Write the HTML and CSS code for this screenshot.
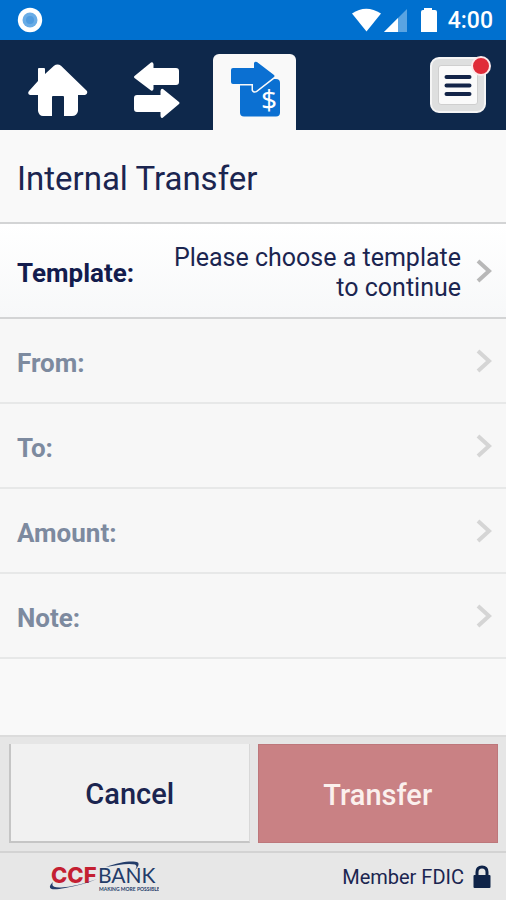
FILE: index.html
```html
<!DOCTYPE html>
<html lang="en">
<head>
<meta charset="utf-8">
<meta name="viewport" content="width=device-width, initial-scale=1">
<title>Internal Transfer</title>
<link rel="stylesheet" href="styles.css">
</head>
<body>
<div class="app">
  <div class="status">
    <svg class="status-dot" width="26" height="26" viewBox="0 0 26 26" aria-hidden="true"><circle cx="13" cy="13" r="12.2" fill="#fff"/><circle cx="13" cy="13" r="7.5" fill="#69ace6"/><circle cx="13" cy="13" r="4" fill="#4f9bdf"/></svg>
    <div class="status-right">
      <svg width="88" height="26" viewBox="0 0 88 26" aria-hidden="true">
        <path d="M0 6.500Q14 -3 29 6.500L14.500 24.500Z" fill="#fff"/>
        <path d="M55 2V25H32Z" fill="#5aa4e2"/><path d="M46 11V25H32Z" fill="#fff"/>
        <path d="M72 1H80V3H83Q85 3 85 5V25H69V5Q69 3 71 3H72Z" fill="#fff"/>
      </svg>
      <span>4:00</span>
    </div>
  </div>
  <nav class="nav">
    <a class="tab" href="#" aria-label="Home">
      <svg width="60" height="54" viewBox="0 0 60 54" aria-hidden="true"><path d="M10 5Q10 4 11 4H16Q17 4 17 5V10L26 1.800Q29.500 -1 33 1.800L59 27Q60 30 57 31H50V47Q49 52 44 52H36V33Q36 32 35 32H25Q24 32 24 33V52H15Q11 52 10 47V31H2Q-1 30 1 27L10 17Z" fill="#fff"/></svg>
    </a>
    <a class="tab tab-arrows" href="#" aria-label="Transfers">
      <svg width="46" height="56" viewBox="0 0 46 56" aria-hidden="true" fill="#fff"><path d="M0.500 14L17 0.500Q19 -.5 19.500 2V6H42Q45 6 45 9V20Q45 23 42 23H19.500V27Q19 29.500 17 28.500L.5 16Q-.5 15 .5 14Z"/><path d="M45 40L29 27Q27 26 26.500 29V33H3Q0 33 0 36V47Q0 50 3 50H26.500V54Q27 57 29 55.500L45 42Q46 41 45 40Z"/></svg>
    </a>
    <a class="tab tab-active" href="#" aria-label="Internal transfer" aria-current="page">
      <svg width="52" height="56" viewBox="0 0 52 56" aria-hidden="true">
        <rect x="11" y="18" width="40" height="37.500" rx="4" fill="#0b70d2"/>
        <path d="M4 7H25V2Q26 0 28 1L45 14Q46 15 45 16L27 30Q25 31 24 29V23H4Q2 23 2 21V9Q2 7 4 7Z" fill="#0b70d2" stroke="#f9f9f9" stroke-width="3" paint-order="stroke"/>
        <text class="dollar" x="40" y="49" text-anchor="middle">$</text>
      </svg>
    </a>
    <button class="menu" type="button" aria-label="Menu">
      <span class="menu-inner"><svg width="28" height="24" viewBox="0 0 28 24" aria-hidden="true"><path d="M2.500 4H25.500M2.500 12.500H25.500M2.500 21H25.500" stroke="#132448" stroke-width="4" stroke-linecap="round"/></svg></span>
      <span class="badge"></span>
    </button>
  </nav>
  <main class="content">
    <h1>Internal Transfer</h1>
    <button class="row row-template" type="button"><span class="label">Template:</span><span class="value">Please choose a template to continue</span><svg class="chev" width="16" height="24" viewBox="0 0 16 24" aria-hidden="true"><path d="M2 2L13 12L2 22"/></svg></button>
    <button class="row" type="button" disabled><span class="label">From:</span><svg class="chev" width="16" height="24" viewBox="0 0 16 24" aria-hidden="true"><path d="M2 2L13 12L2 22"/></svg></button>
    <button class="row" type="button" disabled><span class="label">To:</span><svg class="chev" width="16" height="24" viewBox="0 0 16 24" aria-hidden="true"><path d="M2 2L13 12L2 22"/></svg></button>
    <button class="row" type="button" disabled><span class="label">Amount:</span><svg class="chev" width="16" height="24" viewBox="0 0 16 24" aria-hidden="true"><path d="M2 2L13 12L2 22"/></svg></button>
    <button class="row" type="button" disabled><span class="label">Note:</span><svg class="chev" width="16" height="24" viewBox="0 0 16 24" aria-hidden="true"><path d="M2 2L13 12L2 22"/></svg></button>
  </main>
  <div class="actions">
    <button class="btn cancel" type="button">Cancel</button>
    <button class="btn transfer" type="button" disabled>Transfer</button>
  </div>
  <footer class="footer">
    <svg class="logo" width="110" height="32" viewBox="0 0 110 32" role="img" aria-label="CCFBANK, making more possible">
      <text class="ccf" x="2" y="22">CCF</text>
      <text class="bank" x="49" y="22">BANK</text>
      <text class="tag" x="50" y="30">MAKING MORE POSSIBLE</text>
      <path d="M4 21C-3 28 2 30 16 27Q34 24 48 18Q26 26 12 26.500Q1 27 4 21Z" fill="#233c69"/>
      <path d="M57 6C70 1 84 -1 89 1.500Q91 4 86 9Q89 5 86 3.500C79 2 68 4 57 6Z" fill="#233c69"/>
    </svg>
    <div class="fdic"><span>Member FDIC</span>
      <svg width="18" height="24" viewBox="0 0 18 24" aria-hidden="true"><path d="M4 11V7Q4 2 9 2T14 7V11" fill="none" stroke="#0f2449" stroke-width="3"/><rect x="0.500" y="10" width="17" height="13" rx="1" fill="#0f2449"/></svg>
    </div>
  </footer>
</div>
</body>
</html>
```
FILE: styles.css
```css
* { box-sizing: border-box; }
body { margin: 0; font-family: Roboto, "Liberation Sans", sans-serif; color: #1b2550; background: #f9f9f9; }
button { font: inherit; color: inherit; border: 0; border-radius: 0; margin: 0; padding: 0; background: none; }
svg { display: block; flex: none; }
.app { min-height: 100vh; display: flex; flex-direction: column; }
.status { height: 40px; padding: 0 13px 0 17px; display: flex; align-items: center; justify-content: space-between; background: #0070cf; color: #fff; }
.status-right { display: flex; align-items: center; gap: 8px; font-size: 23px; font-weight: 500; line-height: 28px; }
.status-right span { padding-top: 2px; }
.nav { height: 90px; padding: 0 20px 0 28px; display: flex; align-items: flex-end; background: #0e284b; }
.tab { height: 76px; display: flex; justify-content: center; padding-top: 10px; }
.tab + .tab { margin-left: 46px; }
.tab-arrows { padding-top: 8px; }
.tab + .tab-active { width: 83px; margin-left: 33px; padding-top: 7px; background: #f9f9f9; border-radius: 6px 6px 0 0; }
.dollar { font: 28px "Noto Sans", sans-serif; fill: #fff; }
.menu { position: relative; width: 56px; height: 56px; margin: 0 0 17px auto; padding: 6px; border-radius: 9px; background: #dedfdf; border: 2px solid #f5f5f5; }
.menu-inner { height: 100%; display: flex; align-items: center; justify-content: center; background: #fafafa; border: 1px solid #cfcfcf; border-radius: 3px; }
.badge { position: absolute; top: -3px; right: -7px; width: 20px; height: 20px; border-radius: 50%; border: 2px solid #fce9ea; background: #e02b38; }
.content { flex: 1; }
h1 { margin: 0; height: 94px; padding: 5px 17px 0; display: flex; align-items: center; font-size: 33px; line-height: 40px; font-weight: 400; border-bottom: 2px solid #d3d4d5; }
.row { width: 100%; min-height: 85px; padding: 0 14px 0 17px; display: flex; align-items: center; text-align: left; background: #f7f7f7; border-bottom: 2px solid #e7e8e8; font-size: 26px; line-height: 30px; }
.row .label { flex: 1; padding-top: 5px; color: #7d8a9f; font-weight: 700; }
.row .chev { fill: none; stroke: #d5d5d5; stroke-width: 4px; }
.row-template { min-height: 95px; background: linear-gradient(#fff, #f7f8f9); border-bottom-color: #d3d4d5; }
.row-template .label { color: #131c4d; }
.row-template .value { width: 300px; padding-top: 5px; text-align: right; margin-right: 15px; font-size: 25px; }
.row-template .chev { stroke: #b8b8b8; }
.actions { display: grid; grid-template-columns: 1fr 1fr; gap: 8px; padding: 7px 8px 8px 9px; background: #e6e6e6; border-top: 2px solid #dcdcdc; }
.btn { height: 99px; padding-top: 3px; font-size: 29px; line-height: 36px; font-weight: 500; }
.cancel { background: #f1f1f1; border: solid #c5c5c5; border-width: 0 1px 2px 2px; border-right-color: #d8d8d8; }
.transfer { background: #c98184; color: #fbf0ed; border: 1px solid #bd777b; }
.footer { height: 49px; padding: 0 15px 0 49px; display: flex; align-items: center; justify-content: space-between; background: #e7e7e7; border-top: 2px solid #d3d3d3; }
.fdic { display: flex; align-items: center; gap: 9px; font-size: 20px; line-height: 24px; }
.ccf { font: 800 22px Inter, sans-serif; fill: #c41f32; }
.bank { font: 400 21px Lato, sans-serif; fill: #233c69; }
.tag { font: 700 5px Lato, sans-serif; fill: #233c69; }
```
